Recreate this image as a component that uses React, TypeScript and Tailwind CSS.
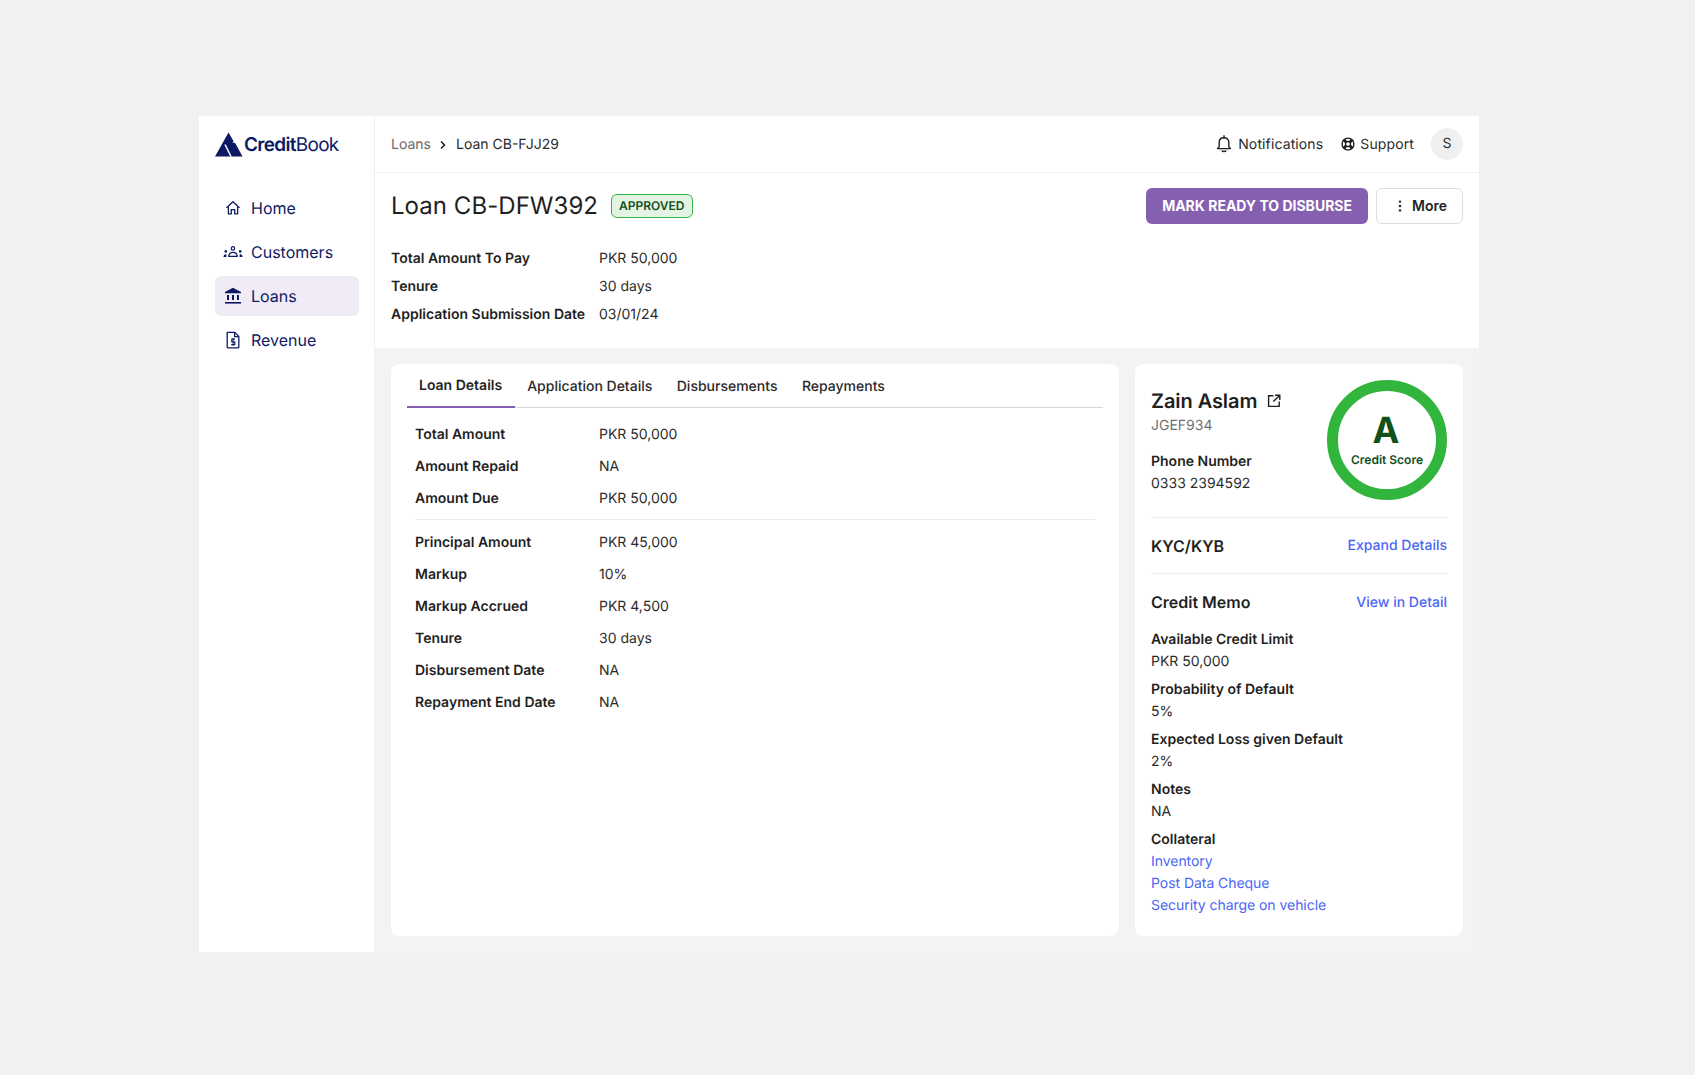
import React from "react";

const FONT = "font-['Inter',sans-serif] [text-rendering:geometricPrecision] antialiased";

function Logo() {
  return (
    <div className="flex items-center h-[56px] pl-4">
      <svg width="28" height="25" viewBox="0 0 28 25" className="mr-[1px] mt-[1px]">
        <path d="M13.5 0.5 L18.6 9.2 L17.4 10.4 L20.2 11 L27.5 24.5 L0 24.5 Z" fill="#0d1a63" />
        <path d="M10 12.5 L16 24.5" stroke="#fff" strokeWidth="1.5" fill="none" />
      </svg>
      <span className="text-[19px] tracking-[-0.7px] text-[#0d1a63] leading-none">
        <span className="font-semibold">Credit</span>
        <span className="font-normal">Book</span>
      </span>
    </div>
  );
}

function HomeIcon() {
  return (
    <svg width="16" height="16" viewBox="0 0 16 16" fill="none" stroke="#0d1a63" strokeWidth="1.3" strokeLinejoin="round">
      <path d="M1.8 7.4 L8 1.8 L14.2 7.4" strokeLinecap="round" />
      <path d="M3.4 6.4 V13.8 H6.3 V9.6 H9.7 V13.8 H12.6 V6.4" />
    </svg>
  );
}
function CustomersIcon() {
  return (
    <svg width="20" height="12" viewBox="0 0 20 12" fill="#0d1a63">
      <circle cx="10" cy="2.4" r="1.7" fill="none" stroke="#0d1a63" strokeWidth="1.2" />
      <path d="M5.8 10.4 C5.8 7.6 7.8 6.4 10 6.4 C12.2 6.4 14.2 7.6 14.2 10.4 Z" fill="none" stroke="#0d1a63" strokeWidth="1.3" strokeLinejoin="round" />
      <circle cx="2.8" cy="5.4" r="1.3" />
      <path d="M0.5 11 C0.5 9 1.4 8.2 3.4 8.2 L3.4 11 Z" />
      <circle cx="17.2" cy="5.4" r="1.3" />
      <path d="M19.5 11 C19.5 9 18.6 8.2 16.6 8.2 L16.6 11 Z" />
    </svg>
  );
}
function LoansIcon() {
  return (
    <svg width="18" height="18" viewBox="0 0 18 18" fill="#0d1a63">
      <path d="M9 0.8 L17 5 V6.2 H1 V5 Z" />
      <rect x="3" y="8" width="2" height="5" />
      <rect x="8" y="8" width="2" height="5" />
      <rect x="13" y="8" width="2" height="5" />
      <rect x="1" y="15" width="16" height="1.6" />
    </svg>
  );
}
function RevenueIcon() {
  return (
    <svg width="16" height="18" viewBox="0 0 16 18" fill="none" stroke="#0d1a63" strokeWidth="1.3" strokeLinejoin="round">
      <path d="M2.2 1.4 H9.8 L13.8 5.4 V16.2 A0.6 0.6 0 0 1 13.2 16.8 H2.8 A0.6 0.6 0 0 1 2.2 16.2 Z" />
      <path d="M9.6 1.6 V5.6 H13.6" />
      <path d="M10 8.2 H6.8 V10.9 H9.8 V13.6 H6.2" strokeWidth="1.2" />
      <path d="M8.1 7 V14.8" strokeWidth="0.9" />
    </svg>
  );
}
function BellIcon() {
  return (
    <svg width="16" height="18" viewBox="0 0 16 18" fill="none" stroke="#1f1f1f" strokeWidth="1.4" strokeLinejoin="round">
      <path d="M1.6 13.6 H14.4 L12.8 11.6 V7.4 C12.8 4.6 10.8 2.8 8 2.8 C5.2 2.8 3.2 4.6 3.2 7.4 V11.6 Z" />
      <path d="M8 0.8 V2.8" strokeLinecap="round" />
      <path d="M6.2 15.8 C6.8 16.8 9.2 16.8 9.8 15.8" strokeLinecap="round" />
    </svg>
  );
}
function SupportIcon() {
  return (
    <svg width="14" height="14" viewBox="0 0 14 14" fill="none" stroke="#1f1f1f">
      <circle cx="7" cy="7" r="5.9" strokeWidth="1.4" />
      <circle cx="7" cy="7" r="2.5" strokeWidth="1.3" />
      <path d="M2.8 2.8 L5.2 5.2 M11.2 2.8 L8.8 5.2 M2.8 11.2 L5.2 8.8 M11.2 11.2 L8.8 8.8" strokeWidth="3" />
    </svg>
  );
}
function ExternalIcon() {
  return (
    <svg width="14" height="14" viewBox="0 0 14 14" fill="none" stroke="#1f1f1f" strokeWidth="1.4">
      <path d="M6.5 1.8 H1.6 V12.4 H12.2 V7.5" />
      <path d="M8 1.2 H12.8 V6 M12.6 1.4 L6.4 7.6" />
    </svg>
  );
}

function NavItem({ icon, label, active }: { icon: React.ReactNode; label: string; active?: boolean }) {
  return (
    <div className={`flex items-center h-10 rounded-md mb-[4px] ${active ? "bg-[#f0ebf6]" : ""}`}>
      <div className="w-9 flex justify-center shrink-0">{icon}</div>
      <span className="text-base text-[#0d1a63]">{label}</span>
    </div>
  );
}

function Row({ k, v, w, h }: { k: string; v: string; w: string; h: string }) {
  return (
    <div className={`flex items-center text-sm pt-px ${h}`}>
      <span className={`font-semibold text-[#1f1f1f] ${w}`}>{k}</span>
      <span className="text-[#2a2a2a]">{v}</span>
    </div>
  );
}

function Stack({ k, children }: { k: string; children: React.ReactNode }) {
  return (
    <div className="mb-[6px]">
      <div className="text-sm font-semibold text-[#1f1f1f] leading-[22px]">{k}</div>
      <div className="text-sm text-[#2a2a2a] leading-[22px]">{children}</div>
    </div>
  );
}

export default function App() {
  const tabs = ["Loan Details", "Application Details", "Disbursements", "Repayments"];
  return (
    <div className={`${FONT} bg-[#f1f1f1] min-h-screen pt-[116px] pl-[199px]`}>
      <div className="flex w-[1280px] h-[836px] bg-white">
        <aside className="w-[176px] shrink-0 border-r border-[#efefef]">
          <Logo />
          <nav className="pl-4 pr-[15px] pt-[16px]">
            <NavItem icon={<HomeIcon />} label="Home" />
            <NavItem icon={<CustomersIcon />} label="Customers" />
            <NavItem icon={<LoansIcon />} label="Loans" active />
            <NavItem icon={<RevenueIcon />} label="Revenue" />
          </nav>
        </aside>
        <main className="flex-1 flex flex-col min-w-0">
          <header className="h-[57px] shrink-0 flex items-center justify-between px-4 border-b border-[#efefef] text-sm">
            <div className="flex items-center pt-px">
              <span className="text-[#6b6b6b]">Loans</span>
              <svg width="8" height="10" viewBox="0 0 8 10" fill="none" stroke="#1f1f1f" strokeWidth="1.5" className="mx-[8.5px]">
                <path d="M2 1.5 L5.5 5 L2 8.5" />
              </svg>
              <span className="text-[#2a2a2a]">Loan CB-FJJ29</span>
            </div>
            <div className="flex items-center text-[#2a2a2a]">
              <BellIcon />
              <span className="ml-[6px] pt-px tracking-[0.12px]">Notifications</span>
              <span className="ml-[18px]"><SupportIcon /></span>
              <span className="ml-[5px] pt-px tracking-[0.12px]">Support</span>
              <div className="ml-[17px] w-8 h-8 rounded-full bg-[#f0f0f0] flex items-center justify-center">S</div>
            </div>
          </header>
          <section className="px-4 shrink-0 h-[175px]">
            <div className="flex items-center justify-between pt-[15px]">
              <div className="flex items-center">
                <h1 className="text-2xl font-normal text-[#1f1f1f] tracking-[0.05px]">Loan CB-DFW392</h1>
                <span className="ml-[13px] h-6 px-[7px] flex items-center rounded-md border border-[#33b540] bg-[#e3f4e5] text-xs font-semibold text-[#13501b]">APPROVED</span>
              </div>
              <div className="flex items-center">
                <button className="h-9 px-4 rounded-md bg-[#8660b0] text-white text-sm font-bold">MARK READY TO DISBURSE</button>
                <button className="ml-2 h-9 w-[87px] pr-[15px] rounded-md border border-[#dedede] bg-white text-sm font-semibold text-[#1f1f1f] flex items-center justify-end">
                  <svg width="4" height="12" viewBox="0 0 4 12" fill="#1f1f1f" className="mr-[10px]">
                    <circle cx="2" cy="1.6" r="1.2" /><circle cx="2" cy="6" r="1.2" /><circle cx="2" cy="10.4" r="1.2" />
                  </svg>
                  More
                </button>
              </div>
            </div>
            <div className="mt-[20px]">
              <Row k="Total Amount To Pay" v="PKR 50,000" w="w-[208px]" h="h-[28px]" />
              <Row k="Tenure" v="30 days" w="w-[208px]" h="h-[28px]" />
              <Row k="Application Submission Date" v="03/01/24" w="w-[208px]" h="h-[28px]" />
            </div>
          </section>
          <div className="flex-1 bg-[#f3f3f5] p-4 flex gap-4 min-h-0">
            <div className="w-[728px] bg-white rounded-lg px-4">
              <div className="flex h-[44px] border-b border-[#d8d8d8] text-sm">
                {tabs.map((t, i) => (
                  <div
                    key={t}
                    className={`h-[44px] flex items-center pt-px ${i === 0 ? "pl-3 pr-[13px] font-semibold text-[#1f1f1f] border-b-2 border-[#8660b0]" : "px-3 font-medium text-[#2a2a2a] mr-[0.5px]"}`}
                  >
                    {t}
                  </div>
                ))}
              </div>
              <div className="pl-2 pr-2 pt-[10px]">
                <Row k="Total Amount" v="PKR 50,000" w="w-[184px]" h="h-[32px]" />
                <Row k="Amount Repaid" v="NA" w="w-[184px]" h="h-[32px]" />
                <Row k="Amount Due" v="PKR 50,000" w="w-[184px]" h="h-[32px]" />
                <div className="border-t border-[#ececec] mt-[5px] mb-[6px]" />
                <Row k="Principal Amount" v="PKR 45,000" w="w-[184px]" h="h-[32px]" />
                <Row k="Markup" v="10%" w="w-[184px]" h="h-[32px]" />
                <Row k="Markup Accrued" v="PKR 4,500" w="w-[184px]" h="h-[32px]" />
                <Row k="Tenure" v="30 days" w="w-[184px]" h="h-[32px]" />
                <Row k="Disbursement Date" v="NA" w="w-[184px]" h="h-[32px]" />
                <Row k="Repayment End Date" v="NA" w="w-[184px]" h="h-[32px]" />
              </div>
            </div>
            <div className="w-[328px] bg-white rounded-lg px-4 pt-4">
              <div className="flex justify-between h-[138px] border-b border-[#ececec]">
                <div className="pt-[9px]">
                  <div className="flex items-center h-[22px] mt-[1px]">
                    <span className="text-xl font-semibold text-[#1f1f1f] tracking-[-0.08px]">Zain Aslam</span>
                    <span className="ml-[10px]"><ExternalIcon /></span>
                  </div>
                  <div className="text-sm text-[#707070] leading-[22px] mt-[3px]">JGEF934</div>
                  <div className="text-sm font-semibold text-[#1f1f1f] leading-[22px] mt-[14px]">Phone Number</div>
                  <div className="text-sm text-[#2a2a2a] leading-[22px]">0333 2394592</div>
                </div>
                <div className="w-[120px] h-[120px] rounded-full border-[11px] border-[#32b53d] flex flex-col items-center justify-center text-[#12501a] shrink-0">
                  <span className="text-[36px] font-bold leading-[36px] mt-[2px] mb-[2px] mr-[2px]">A</span>
                  <span className="text-xs font-semibold leading-[20px]">Credit Score</span>
                </div>
              </div>
              <div className="flex items-center justify-between h-[56px] border-b border-[#ececec]">
                <span className="text-base font-semibold text-[#1f1f1f]">KYC/KYB</span>
                <span className="text-sm font-medium text-[#4a66f5] pt-px">Expand Details</span>
              </div>
              <div className="flex items-center justify-between h-[56px]">
                <span className="text-base font-semibold text-[#1f1f1f]">Credit Memo</span>
                <span className="text-sm font-medium text-[#4a66f5] pt-px">View in Detail</span>
              </div>
              <div className="-mt-px">
                <Stack k="Available Credit Limit">PKR 50,000</Stack>
                <Stack k="Probability of Default">5%</Stack>
                <Stack k="Expected Loss given Default">2%</Stack>
                <Stack k="Notes">NA</Stack>
                <Stack k="Collateral">
                  <div className="text-[#4a66f5] tracking-[-0.05px]">Inventory</div>
                  <div className="text-[#4a66f5] tracking-[-0.05px]">Post Data Cheque</div>
                  <div className="text-[#4a66f5] tracking-[-0.05px]">Security charge on vehicle</div>
                </Stack>
              </div>
            </div>
          </div>
        </main>
      </div>
    </div>
  );
}
